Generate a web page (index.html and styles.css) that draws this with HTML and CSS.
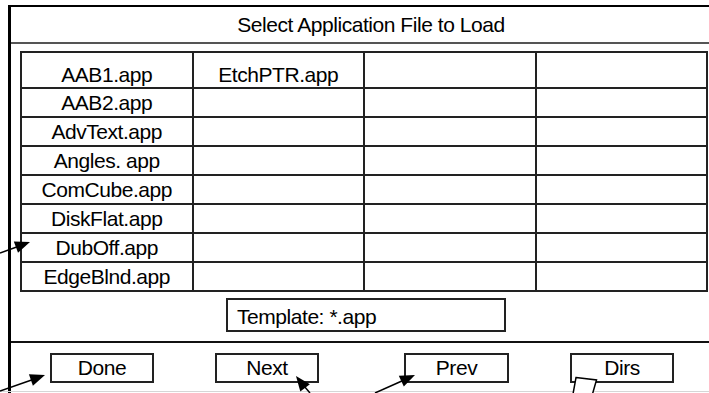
FILE: index.html
```html
<!DOCTYPE html>
<html lang="en">
<head>
    <meta charset="UTF-8">
    <title>Select Application File to Load</title>
    <link rel="stylesheet" href="styles.css">
</head>
<body>
    <div class="frame">
        <div class="title">Select Application File to Load</div>

        <div class="browser">
            <div class="files">
                <div class="cell">AAB1.app</div>
                <div class="cell">EtchPTR.app</div>
                <div class="cell"></div>
                <div class="cell"></div>

                <div class="cell">AAB2.app</div>
                <div class="cell"></div>
                <div class="cell"></div>
                <div class="cell"></div>

                <div class="cell">AdvText.app</div>
                <div class="cell"></div>
                <div class="cell"></div>
                <div class="cell"></div>

                <div class="cell">Angles. app</div>
                <div class="cell"></div>
                <div class="cell"></div>
                <div class="cell"></div>

                <div class="cell">ComCube.app</div>
                <div class="cell"></div>
                <div class="cell"></div>
                <div class="cell"></div>

                <div class="cell">DiskFlat.app</div>
                <div class="cell"></div>
                <div class="cell"></div>
                <div class="cell"></div>

                <div class="cell">DubOff.app</div>
                <div class="cell"></div>
                <div class="cell"></div>
                <div class="cell"></div>

                <div class="cell">EdgeBlnd.app</div>
                <div class="cell"></div>
                <div class="cell"></div>
                <div class="cell"></div>
            </div>

            <div class="template-row">
                <div class="template">Template: *.app</div>
            </div>
        </div>

        <div class="actions">
            <button class="btn">Done</button>
            <button class="btn">Next</button>
            <button class="btn btn-prev">Prev</button>
            <button class="btn">Dirs</button>
        </div>
    </div>

    <!-- annotation pointers drawn over the dialog -->
    <svg class="callouts" width="709" height="393" viewBox="0 0 709 393">
        <line x1="0" y1="391.5" x2="709" y2="391.5" stroke="#d6d6d6" stroke-width="1"/>

        <line x1="0" y1="253" x2="18" y2="246.5" stroke="#000" stroke-width="1.5"/>
        <polygon points="30,242 18,252.8 13.8,241.6" fill="#000"/>

        <line x1="0" y1="391" x2="33" y2="379.5" stroke="#000" stroke-width="1.5"/>
        <polygon points="45,375 32.9,385.7 28.9,374.3" fill="#000"/>

        <line x1="310" y1="393" x2="304" y2="386" stroke="#000" stroke-width="1.5"/>
        <polygon points="296,376 309.9,384.3 300.3,391.5" fill="#000"/>

        <line x1="375" y1="393" x2="403" y2="380.5" stroke="#000" stroke-width="1.5"/>
        <polygon points="415,375 403.8,386.6 398.8,375.7" fill="#000"/>

        <polygon points="576,377.5 596.5,380 592.5,394 573,394" fill="#fff" stroke="#000" stroke-width="1.5"/>
    </svg>
</body>
</html>
```

FILE: styles.css
```css
html, body {
    margin: 0;
    padding: 0;
    background: #fff;
}

body {
    width: 709px;
    height: 393px;
    overflow: hidden;
    position: relative;
    font-family: "Liberation Sans", Arial, sans-serif;
    font-size: 21px;
    letter-spacing: -0.45px;
    color: #000;
}

.frame {
    margin: 5px 0 0 8px;
    width: 720px;
    min-height: 400px;
    border-top: 2px solid #000;
    border-left: 3px solid #000;
}

.title {
    box-sizing: border-box;
    height: 37px;
    padding-top: 1px;
    line-height: 34px;
    text-align: center;
    border-bottom: 2px solid #555;
}

.browser {
    padding: 7px 0 0 9px;
}

.files {
    box-sizing: border-box;
    width: 688px;
    display: grid;
    grid-template-columns: repeat(4, 1fr);
    border-top: 2px solid #222;
    border-left: 2px solid #222;
}

.cell {
    height: 27px;
    line-height: 27px;
    text-align: center;
    white-space: nowrap;
    border-right: 2px solid #222;
    border-bottom: 2px solid #222;
}

/* first row is a bit taller, text sits low */
.cell:nth-child(-n+4) {
    height: 25px;
    line-height: 25px;
    padding-top: 9px;
}

.template-row {
    box-sizing: border-box;
    width: 688px;
    padding: 6px 0 0 4px;
    display: flex;
    justify-content: center;
}

.template {
    box-sizing: border-box;
    width: 280px;
    height: 34px;
    padding: 3px 9px 0;
    line-height: 27px;
    border: 2px solid #222;
}

.actions {
    margin-top: 9px;
    padding: 10px 0 0 39px;
    border-top: 2px solid #111;
    display: flex;
    gap: 61px;
}

.btn {
    box-sizing: border-box;
    width: 104px;
    height: 30px;
    padding: 0;
    margin: 0;
    background: #fff;
    border: 2px solid #222;
    border-radius: 0;
    font-family: inherit;
    font-size: 21px;
    letter-spacing: -0.45px;
    line-height: 26px;
    color: #000;
    text-align: center;
}

.btn-prev {
    width: 105px;
    margin-left: 24px;
}

.callouts {
    position: absolute;
    top: 0;
    left: 0;
    pointer-events: none;
}
```
